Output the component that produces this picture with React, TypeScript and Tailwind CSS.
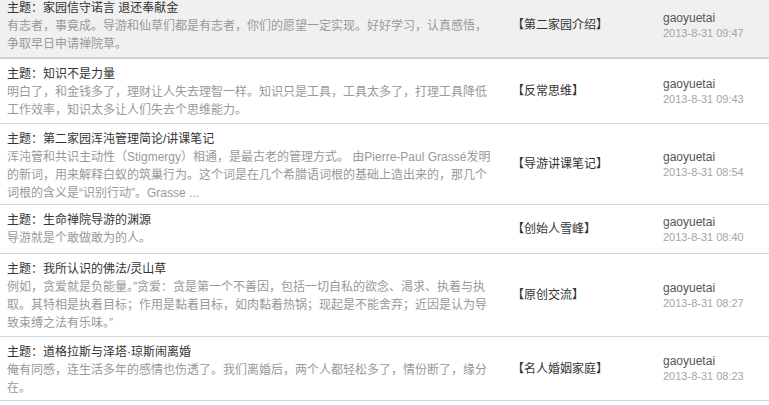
import { FC } from 'react';

interface Topic {
  title: string;
  lines: string[];
  category: string;
  user: string;
  time: string;
  rowClass: string;
}

const topics: Topic[] = [
  {
    title: '家园信守诺言 退还奉献金',
    lines: [
      '有志者，事竟成。导游和仙草们都是有志者，你们的愿望一定实现。好好学习，认真感悟，',
      '争取早日申请禅院草。',
    ],
    category: '【第二家园介绍】',
    user: 'gaoyuetai',
    time: '2013-8-31 09:47',
    rowClass: 'h-[66px] bg-[#f0f0f0] border-b-2 border-[#d2d2d2]',
  },
  {
    title: '知识不是力量',
    lines: [
      '明白了，和金钱多了，理财让人失去理智一样。知识只是工具，工具太多了，打理工具降低',
      '工作效率，知识太多让人们失去个思维能力。',
    ],
    category: '【反常思维】',
    user: 'gaoyuetai',
    time: '2013-8-31 09:43',
    rowClass: 'h-[65px] border-b border-[#d3dde3]',
  },
  {
    title: '第二家园浑沌管理简论/讲课笔记',
    lines: [
      '浑沌管和共识主动性（Stigmergy）相通，是最古老的管理方式。 由Pierre-Paul Grassé发明',
      '的新词，用来解释白蚁的筑巢行为。这个词是在几个希腊语词根的基础上造出来的，那几个',
      '词根的含义是“识别行动”。Grasse ...',
    ],
    category: '【导游讲课笔记】',
    user: 'gaoyuetai',
    time: '2013-8-31 08:54',
    rowClass: 'h-[81px] border-b border-[#c9d9e0]',
  },
  {
    title: '生命禅院导游的渊源',
    lines: ['导游就是个敢做敢为的人。'],
    category: '【创始人雪峰】',
    user: 'gaoyuetai',
    time: '2013-8-31 08:40',
    rowClass: 'h-[49px] border-b border-[#c9d9e0]',
  },
  {
    title: '我所认识的佛法/灵山草',
    lines: [
      '例如，贪爱就是负能量。”贪爱：贪是第一个不善因，包括一切自私的欲念、渴求、执着与执',
      '取。其特相是执着目标；作用是黏着目标，如肉黏着热锅；现起是不能舍弃；近因是认为导',
      '致束缚之法有乐味。”',
    ],
    category: '【原创交流】',
    user: 'gaoyuetai',
    time: '2013-8-31 08:27',
    rowClass: 'h-[83px] border-b border-[#c9d9e0]',
  },
  {
    title: '道格拉斯与泽塔·琼斯闹离婚',
    lines: [
      '俺有同感，连生活多年的感情也伤透了。我们离婚后，两个人都轻松多了，情份断了，缘分',
      '在。',
    ],
    category: '【名人婚姻家庭】',
    user: 'gaoyuetai',
    time: '2013-8-31 08:23',
    rowClass: 'h-[64px] border-b border-[#c9d9e0]',
  },
];

const TopicRow: FC<{ topic: Topic }> = ({ topic }) => (
  <div className={`flex ${topic.rowClass}`}>
    <div className="w-[512px] shrink-0 pl-[7px] pt-[6px]">
      <div className="text-[12px] leading-[18px] text-[#333] whitespace-nowrap">
        主题：{topic.title}
      </div>
      {topic.lines.map((line, i) => (
        <div key={i} className="text-[12px] leading-[18px] text-[#999] whitespace-nowrap">
          {line}
        </div>
      ))}
    </div>
    <div className="w-[151px] shrink-0 flex items-center text-[12px] text-[#333]">
      {topic.category}
    </div>
    <div className="flex flex-col justify-center">
      <span className="text-[12px] leading-[15px] text-[#555]">{topic.user}</span>
      <span className="text-[11px] leading-[14px] text-[#a5a5a5]">{topic.time}</span>
    </div>
  </div>
);

export default function App() {
  return (
    <div className="w-[769px] h-[405px] overflow-hidden bg-white font-['Liberation_Sans','Noto_Sans_CJK_SC',sans-serif]">
      <div className="-mt-[7px]">
        {topics.map((t, i) => (
          <TopicRow key={i} topic={t} />
        ))}
      </div>
    </div>
  );
}
